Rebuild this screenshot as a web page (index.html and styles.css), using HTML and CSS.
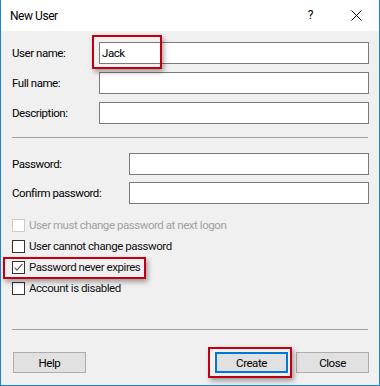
FILE: index.html
```html
<!DOCTYPE html>
<html lang="en">
<head>
  <meta charset="UTF-8">
  <title>New User</title>
  <link rel="stylesheet" href="styles.css">
</head>
<body>
<div class="window">
  <div class="titlebar">
    <span class="title">New User</span>
    <span class="help-q">?</span>
    <svg class="close-x" width="11" height="11" viewBox="0 0 11 11">
      <path d="M0.5 0.5 L10.5 10.5 M10.5 0.5 L0.5 10.5" stroke="#000" stroke-width="1" fill="none"/>
    </svg>
  </div>

  <div class="content">
    <div class="form-grid names">
      <label>User name:</label>
      <input type="text" value="Jack">
      <label>Full name:</label>
      <input type="text">
      <label>Description:</label>
      <input type="text">
    </div>

    <div class="sep sep-top"></div>

    <div class="form-grid passwords">
      <label>Password:</label>
      <input type="password">
      <label>Confirm password:</label>
      <input type="password">
    </div>

    <div class="checks">
      <div class="check disabled"><span class="box"></span>User must change password at next logon</div>
      <div class="check"><span class="box"></span>User cannot change password</div>
      <div class="check"><span class="box">
        <svg width="11" height="11" viewBox="0 0 11 11"><polyline points="1.5,5.5 4,8.2 9.5,1.8" stroke="#555" stroke-width="1.1" fill="none"/></svg>
      </span>Password never expires</div>
      <div class="check"><span class="box"></span>Account is disabled</div>
    </div>

    <div class="sep sep-bottom"></div>

    <div class="buttons">
      <button class="btn">Help</button>
      <span class="spacer"></span>
      <button class="btn default">Create</button>
      <button class="btn">Close</button>
    </div>
  </div>

  <!-- red highlight marks over the dialog -->
  <div class="mark mark-user"></div>
  <div class="mark mark-expire"></div>
  <div class="mark mark-create"></div>
</div>
</body>
</html>
```

FILE: styles.css
```css
body { margin: 0; background: #fff; font-family: Roboto, "Liberation Sans", sans-serif; font-size: 11.5px; letter-spacing: -0.45px; color: #000; }
.window { position: relative; width: 380px; height: 386px; box-sizing: border-box; background: #f0f0f0; border: 1px solid #1883d7; border-top: none; }
.titlebar { height: 31px; background: #fff; display: flex; align-items: center; padding-left: 9px; }
.title { flex: 1; font-size: 12px; }
.help-q { font-size: 12px; margin-right: 38px; margin-top: -1px; }
.close-x { margin-right: 17px; }
.content { padding: 11px 10px 0 11px; }
.form-grid { display: grid; align-items: center; }
.names { grid-template-columns: 87px 1fr; row-gap: 8px; }
.passwords { grid-template-columns: 117px 1fr; row-gap: 7px; margin-top: 15px; }
.form-grid input { height: 22px; box-sizing: border-box; border: 1px solid #7a7a7a; background: #fff; padding: 0 2px; margin: 0; font: inherit; letter-spacing: inherit; outline: none; }
.sep { height: 1px; background: #a0a0a0; margin-right: 1px; }
.sep-top { margin-top: 13px; }
.checks { display: flex; flex-direction: column; gap: 8px; margin-top: 15px; }
.check { display: flex; align-items: center; gap: 4px; height: 13px; line-height: 13px; white-space: nowrap; color: #111; }
.box { width: 13px; height: 13px; box-sizing: border-box; border: 1px solid #333; background: #fff; display: flex; align-items: center; justify-content: center; flex: none; }
.check.disabled { color: #a0a0a0; }
.check.disabled .box { border-color: #ccc; }
.sep-bottom { margin-top: 34px; }
.buttons { display: flex; gap: 8px; margin-top: 22px; padding-left: 1px; }
.spacer { flex: 1; }
.btn { width: 73px; height: 21px; box-sizing: border-box; background: #e1e1e1; border: 1px solid #adadad; font: inherit; letter-spacing: inherit; color: #000; padding: 0; }
.btn.default { border: 2px solid #0078d7; }
.mark { position: absolute; border: 2px solid #c00010; box-shadow: 2px 3px 5px rgba(0,0,0,0.35); }
.mark-user { left: 91px; top: 35px; width: 66px; height: 30px; }
.mark-expire { left: 2px; top: 257px; width: 139px; height: 18px; }
.mark-create { left: 207px; top: 347px; width: 80px; height: 27px; }
```
